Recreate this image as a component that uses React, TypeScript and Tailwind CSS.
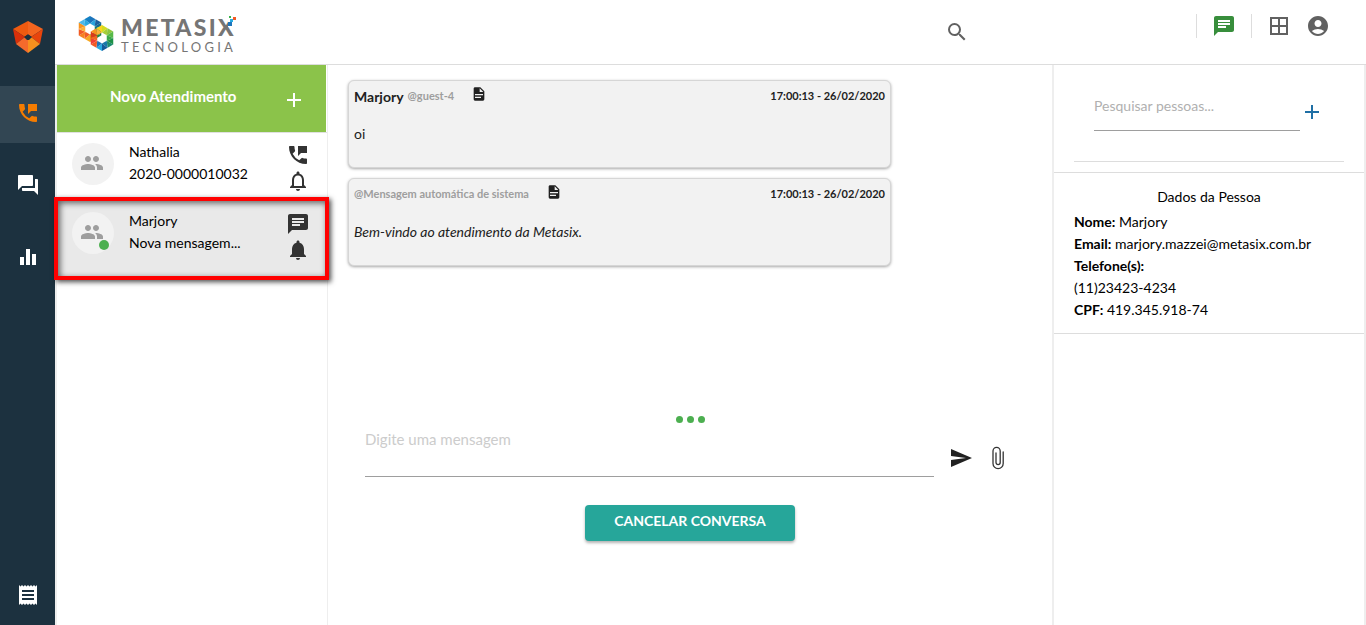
import React from 'react';
import type { IconType } from 'react-icons';
import {
  MdAccountCircle,
  MdAdd,
  MdBorderAll,
  MdChat,
  MdEqualizer,
  MdForum,
  MdNotifications,
  MdNotificationsNone,
  MdPeople,
  MdPermPhoneMsg,
  MdReceipt,
  MdSearch,
  MdSend,
} from 'react-icons/md';

interface Conversation {
  name: string;
  detail: string;
  channel: IconType;
  bell: IconType;
  online: boolean;
  selected: boolean;
}

interface Message {
  id: number;
  author?: string;
  handle: string;
  time: string;
  text: string;
  system?: boolean;
}

const conversations: Conversation[] = [
  { name: 'Nathalia', detail: '2020-0000010032', channel: MdPermPhoneMsg, bell: MdNotificationsNone, online: false, selected: false },
  { name: 'Marjory', detail: 'Nova mensagem...', channel: MdChat, bell: MdNotifications, online: true, selected: true },
];

const messages: Message[] = [
  { id: 1, author: 'Marjory', handle: '@guest-4', time: '17:00:13 - 26/02/2020', text: 'oi' },
  { id: 2, handle: '@Mensagem automática de sistema', time: '17:00:13 - 26/02/2020', text: 'Bem-vindo ao atendimento da Metasix.', system: true },
];

const ShieldLogo = () => (
  <svg className="w-8 h-8" viewBox="0 0 32 32" aria-hidden="true">
    <path fill="#ef5a10" d="M16 0 1 8l12 8 3-3z" />
    <path fill="#f4651f" d="M16 0l15 8-12 8-3-3z" />
    <path fill="#d9300a" d="M1 8l3 15 9-7z" />
    <path fill="#e8440c" d="M31 8l-3 15-9-7z" />
    <path fill="#f46a2c" d="M4 23l9-7 3 3v13z" />
    <path fill="#f7901e" d="M28 23l-9-7-3 3v13z" />
    <path fill="#1c313f" d="M12 16l3-2h2l3 2-3 3h-2z" />
  </svg>
);

// Hexagonal ring made of 18 triangles, clockwise from the top vertex
const HexRing: React.FC<{ cx: number; cy: number; r: number; colors: string[] }> = ({ cx, cy, r, colors }) => {
  const point = (k: number, radius: number) => {
    const angle = ((k * 60 - 90) * Math.PI) / 180;
    return [cx + radius * Math.cos(angle), cy + radius * Math.sin(angle)];
  };

  const triangles = [0, 1, 2, 3, 4, 5].flatMap(k => {
    const a = point(k, r);
    const b = point(k + 1, r);
    const mid = [(a[0] + b[0]) / 2, (a[1] + b[1]) / 2];
    const c = point(k, r * 0.42);
    const d = point(k + 1, r * 0.42);
    return [[a, mid, c], [mid, c, d], [mid, b, d]];
  });

  return (
    <>
      {triangles.map((t, i) => (
        <polygon key={i} points={t.map(p => p.join(',')).join(' ')} fill={colors[i]} />
      ))}
    </>
  );
};

const MetasixLogo = () => (
  <div className="relative flex items-center gap-[7px] text-[#757575]">
    <svg className="w-9 h-9" viewBox="0 0 36 36" aria-hidden="true">
      <HexRing
        cx={12}
        cy={13}
        r={13}
        colors={[
          '#1c75bc', '#27a3dd', '#1b5f9e', '#12698f', '#0b7a6f', '#0f6b4a',
          '#1d8a45', '#58a53a', '#e0a21b', '#f7a823', '#f15a24', '#f58220',
          '#f15a24', '#fbb03b', '#f7931e', '#4db8e8', '#2aa9e0', '#1480c4',
        ]}
      />
      <HexRing
        cx={24}
        cy={22}
        r={13}
        colors={[
          '#d4dc1f', '#a6ce39', '#8dc63f', '#57b947', '#39a949', '#1e9148',
          '#1c8c6e', '#1677a8', '#135a9a', '#29abe2', '#1c75bc', '#f15a24',
          '#ef4136', '#f26522', '#d93a1a', '#f7931e', '#fbb03b', '#f9d423',
        ]}
      />
    </svg>
    <div className="flex flex-col font-['Lato',sans-serif]">
      <span className="text-[23px] leading-[27px] font-black tracking-widest">METASIX</span>
      <span className="text-[13px] leading-3 tracking-[0.25em]">TECNOLOGIA</span>
    </div>
    <svg className="absolute top-[1px] right-0 w-2 h-3" viewBox="0 0 8 12" aria-hidden="true">
      <path fill="#ffffff" d="M0 3h8v4L4 12H0z" />
      <path fill="#39b54a" d="M1 1h2v2H1z" />
      <path fill="#f15a24" d="M5 2h3v3H5z" />
      <path fill="#29abe2" d="M2 4h3v3H2z" />
      <path fill="#1c75bc" d="M0 7h4v4H0z" />
    </svg>
  </div>
);

const DocumentIcon = () => (
  <svg className="w-4 h-4" viewBox="0 0 24 24" fill="currentColor" aria-hidden="true">
    <path d="M13 9h5.5L13 3.500V9M6 2h8l6 6v12a2 2 0 0 1-2 2H6a2 2 0 0 1-2-2V4c0-1.110.89-2 2-2m9 16v-2H6v2h9m3-4v-2H6v2h12z" />
  </svg>
);

const PaperclipIcon = () => (
  <svg className="w-3 h-6" viewBox="0 0 12 24" fill="none" stroke="currentColor" strokeWidth="1.3" strokeLinecap="round" aria-hidden="true">
    <path d="M11.200 6v11.500a5 5 0 0 1-10.200 0V5a3.600 3.600 0 0 1 7.200 0v11.500a2 2 0 0 1-4.200 0V7" />
  </svg>
);

const NavButton: React.FC<{ icon: IconType; label: string; active?: boolean }> = ({ icon: Icon, label, active }) => (
  <button
    type="button"
    aria-label={label}
    className={`flex w-full h-[57px] items-center justify-center pb-[3px] ${active ? 'bg-[#324653] text-[#f57c00]' : 'text-white'}`}
  >
    <Icon className="w-6 h-6" />
  </button>
);

const Sidebar = () => (
  <nav className="flex w-[55px] shrink-0 flex-col items-center bg-[#1c313f]">
    <a href="#" aria-label="Início" className="flex h-[86px] items-start pt-[21px]">
      <ShieldLogo />
    </a>
    <div className="flex w-full flex-col gap-[15px]">
      <NavButton icon={MdPermPhoneMsg} label="Atendimentos" active />
      <NavButton icon={MdForum} label="Conversas" />
      <NavButton icon={MdEqualizer} label="Relatórios" />
    </div>
    <div className="mt-auto w-full">
      <NavButton icon={MdReceipt} label="Registros" />
    </div>
  </nav>
);

const Header = () => (
  <header className="flex h-[65px] items-start border-b border-[#dddddd] pl-[23px] pr-9">
    <a href="#" aria-label="Metasix Tecnologia" className="pt-[14px]">
      <MetasixLogo />
    </a>
    <div className="ml-auto flex text-[#616161]">
      <button type="button" aria-label="Pesquisar" className="mt-5 mr-[227px]">
        <MdSearch className="w-6 h-6" />
      </button>
      <div className="mt-[14px] flex h-6 items-center">
        <button type="button" aria-label="Mensagens" className="border-x border-[#dddddd] px-[15px] text-[#388e3c]">
          <MdChat className="w-6 h-6" />
        </button>
        <button type="button" aria-label="Aplicativos" className="ml-[15px]">
          <MdBorderAll className="w-6 h-6" />
        </button>
        <button type="button" aria-label="Conta" className="ml-[15px]">
          <MdAccountCircle className="w-6 h-6" />
        </button>
      </div>
    </div>
  </header>
);

const ConversationRow: React.FC<{ conversation: Conversation }> = ({ conversation }) => {
  const { name, detail, channel: Channel, bell: Bell, online, selected } = conversation;

  return (
    <li
      className={
        selected
          ? 'relative -ml-[3px] -mr-[2px] h-[83px] border-4 border-[#ff0000] bg-[#e9e9e9] shadow-[2px_2px_5px_rgba(0,0,0,0.7),inset_2px_2px_6px_rgba(0,0,0,0.6)]'
          : 'h-16'
      }
    >
      <button type="button" className={`flex w-full items-start text-left ${selected ? 'pt-[9px] pr-[15px] pl-[14px]' : 'pt-2 pr-[17px] pl-[15px]'}`}>
        <span className="relative mt-[2px] flex h-[42px] w-[42px] items-center justify-center rounded-full bg-[#f2f2f2] pr-[2px] pb-[2px] text-[#9e9e9e]">
          <MdPeople className="w-6 h-6" />
          {online && <span className="absolute right-[5px] bottom-1 h-[10px] w-[10px] rounded-full bg-[#4caf50]" />}
        </span>
        <span className="ml-[15px] flex flex-col leading-[22px]">
          <span>{name}</span>
          <span>{detail}</span>
        </span>
        <span className="ml-auto flex flex-col gap-[2px] pt-[2px] text-[#333333]">
          <Channel className="w-6 h-6" />
          <Bell className="w-6 h-6" />
        </span>
      </button>
    </li>
  );
};

const ConversationList = () => (
  <aside className="w-[273px] shrink-0 border-r border-l-2 border-[#eeeeee]">
    <button type="button" className="flex h-[67px] w-[269px] items-center bg-[#8bc34a] pr-5 pl-[53px] text-[15px] font-bold text-white">
      <span className="pb-1">Novo Atendimento</span>
      <MdAdd className="mt-[2px] ml-auto h-6 w-6" />
    </button>
    <ul className="border-t border-[#e0e0e0]">
      {conversations.map(conversation => (
        <ConversationRow key={conversation.name} conversation={conversation} />
      ))}
    </ul>
  </aside>
);

const MessageCard: React.FC<{ message: Message }> = ({ message }) => (
  <article className="ml-5 h-[88px] w-3/4 rounded-md border border-[#d6d6d6] bg-[#f2f2f2] px-[5px] pt-1 text-[#212121] shadow-[0_1px_3px_rgba(0,0,0,0.35)]">
    <div className="flex h-[22px] items-center">
      {message.author && <strong className="mr-1">{message.author}</strong>}
      <span className="text-[11px] font-bold text-[#9e9e9e]">{message.handle}</span>
      <button type="button" aria-label="Ver detalhes" className="ml-[17px] -mt-1">
        <DocumentIcon />
      </button>
      <time className="ml-auto text-[11px] font-bold">{message.time}</time>
    </div>
    <p className={`mt-4 leading-[22px] ${message.system ? 'italic' : ''}`}>{message.text}</p>
  </article>
);

const Chat = () => (
  <main className="flex min-w-0 flex-1 flex-col pt-[15px] pb-[84px]">
    <div className="flex flex-1 flex-col gap-[10px]">
      {messages.map(message => (
        <MessageCard key={message.id} message={message} />
      ))}
    </div>
    <div className="flex justify-center gap-1">
      <span className="h-[7px] w-[7px] rounded-full bg-[#4caf50]" />
      <span className="h-[7px] w-[7px] rounded-full bg-[#4caf50]" />
      <span className="h-[7px] w-[7px] rounded-full bg-[#4caf50]" />
    </div>
    <form className="flex items-end pr-12 pl-[37px]" onSubmit={e => e.preventDefault()}>
      <textarea
        aria-label="Digite uma mensagem"
        placeholder="Digite uma mensagem"
        rows={1}
        className="h-[54px] min-w-0 flex-1 resize-none border-b border-[#9e9e9e] pt-[5px] text-[15px] leading-[22px] outline-none placeholder:text-[#cccccc]"
      />
      <button type="submit" aria-label="Enviar" className="mb-[7px] ml-[15px] text-[#212121]">
        <MdSend className="w-6 h-6" />
      </button>
      <button type="button" aria-label="Anexar arquivo" className="mb-[7px] ml-[19px] text-[#333333]">
        <PaperclipIcon />
      </button>
    </form>
    <button type="button" className="mt-7 h-9 self-center rounded-sm bg-[#26a69a] px-[29px] pb-[5px] font-bold text-white shadow-[0_2px_3px_rgba(0,0,0,0.3)]">
      CANCELAR CONVERSA
    </button>
  </main>
);

const PersonPanel = () => (
  <aside className="w-[314px] shrink-0 border-x-2 border-[#eeeeee]">
    <div className="h-[108px] border-b border-[#dddddd] px-5">
      <div className="flex h-[97px] items-start border-b border-[#dddddd] pr-5 pl-5">
        <input
          type="search"
          aria-label="Pesquisar pessoas"
          placeholder="Pesquisar pessoas..."
          className="mt-[17px] h-[49px] min-w-0 flex-1 border-b border-[#9e9e9e] pb-[2px] outline-none placeholder:text-[#b0b0b0]"
        />
        <button type="button" aria-label="Adicionar pessoa" className="mt-[35px] text-[#1f6fa5]">
          <MdAdd className="h-6 w-6" />
        </button>
      </div>
    </div>
    <section className="border-b border-[#dddddd] px-5 pt-[13px] pb-3 leading-[22px]">
      <h2 className="mb-[3px] text-center">Dados da Pessoa</h2>
      <p><strong>Nome:</strong> Marjory</p>
      <p><strong>Email:</strong> marjory.mazzei@metasix.com.br</p>
      <p><strong>Telefone(s):</strong></p>
      <p>(11)23423-4234</p>
      <p><strong>CPF:</strong> 419.345.918-74</p>
    </section>
  </aside>
);

const App = () => (
  <div className="flex min-h-screen bg-white font-['Lato','Noto_Sans',sans-serif] text-[14px] text-black">
    <Sidebar />
    <div className="flex min-w-0 flex-1 flex-col">
      <Header />
      <div className="flex flex-1">
        <ConversationList />
        <Chat />
        <PersonPanel />
      </div>
    </div>
  </div>
);

export default App;
